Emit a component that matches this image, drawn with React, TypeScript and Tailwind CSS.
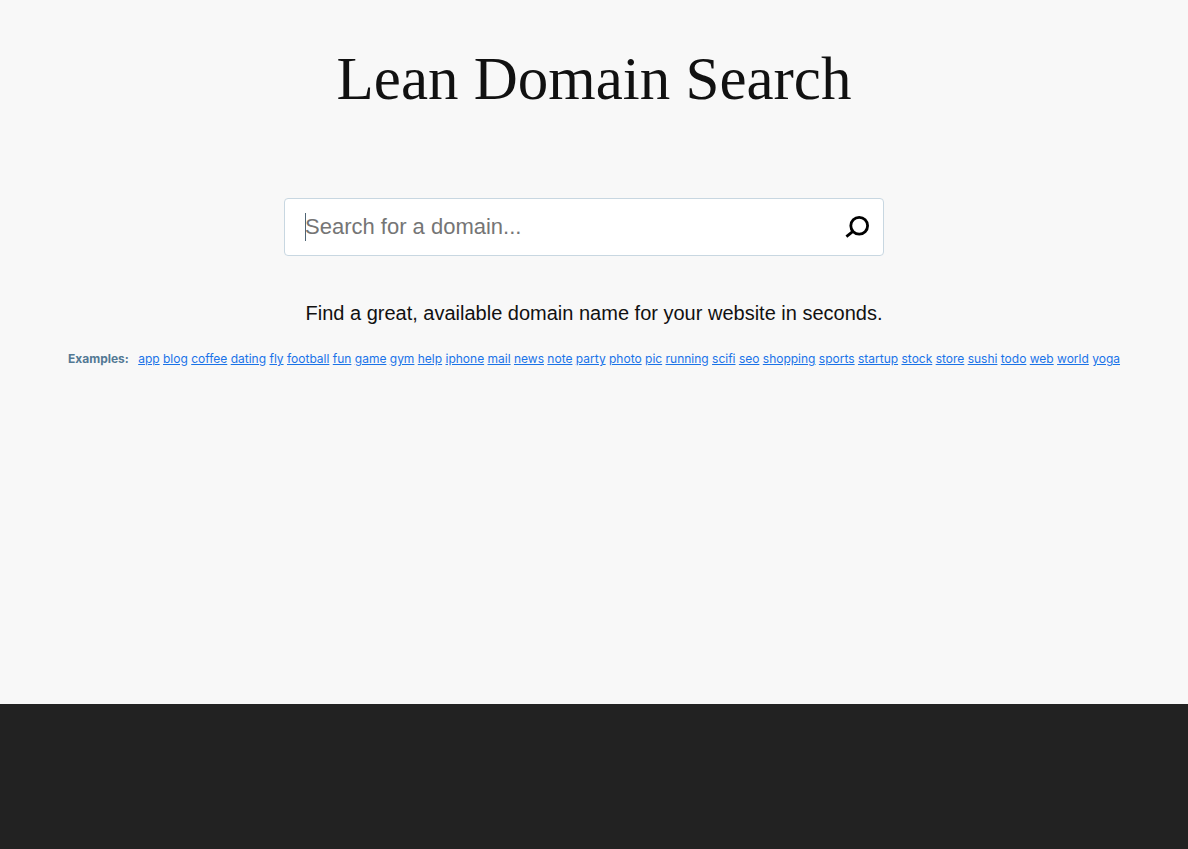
const examples = [
  'app', 'blog', 'coffee', 'dating', 'fly', 'football', 'fun', 'game', 'gym', 'help',
  'iphone', 'mail', 'news', 'note', 'party', 'photo', 'pic', 'running', 'scifi', 'seo',
  'shopping', 'sports', 'startup', 'stock', 'store', 'sushi', 'todo', 'web', 'world', 'yoga',
];

function SearchIcon() {
  return (
    <svg viewBox="0 0 24 24" className="h-6 w-6" fill="none" stroke="#000" strokeWidth="2.8" aria-hidden="true">
      <circle cx="14.2" cy="10.7" r="8.4" />
      <path d="M8.2 16.2 L1.4 21.7" />
    </svg>
  );
}

function SearchForm() {
  return (
    <form
      role="search"
      onSubmit={(e) => e.preventDefault()}
      className="group mr-5 flex h-[58px] w-full max-w-[600px] items-center rounded border border-[#c8d7e1] bg-white pl-5"
    >
      {/* caret shown while the field is empty */}
      <span className="-mr-px h-7 w-px bg-[#4f6575] group-has-[input:not(:placeholder-shown)]:invisible" />
      <input
        type="search"
        name="search"
        aria-label="Search for a domain"
        placeholder="Search for a domain..."
        className="h-full min-w-0 flex-1 bg-transparent font-['Liberation_Sans',sans-serif] text-[22px] outline-none placeholder:text-[#757575] placeholder-shown:caret-transparent"
      />
      <button type="submit" aria-label="Search" className="flex h-full w-[52px] items-center justify-center">
        <SearchIcon />
      </button>
    </form>
  );
}

export default function App() {
  return (
    <div className="flex min-h-screen flex-col bg-[#f8f8f8] font-['Inter',sans-serif] text-[#111]">
      <main className="flex min-h-[704px] flex-col items-center px-4 pt-11">
        <h1 className="text-center font-['Liberation_Serif',serif] text-[61px] leading-[70px]">
          Lean Domain Search
        </h1>
        <div className="mt-[84px] flex w-full justify-center">
          <SearchForm />
        </div>
        <p className="mt-10 text-center font-['Liberation_Sans',sans-serif] text-xl leading-[34px]">
          Find a great, available domain name for your website in seconds.
        </p>
        <p className="mt-5 text-center text-xs leading-[18px]">
          <strong className="mr-[6px] text-[#537994]">Examples:</strong>{' '}
          {examples.map((name) => (
            <span key={name}>
              <a href={`#${name}`} className="text-[#1a73e8] underline">
                {name}
              </a>{' '}
            </span>
          ))}
        </p>
      </main>
      <footer className="flex-1 bg-[#222]" />
    </div>
  );
}
